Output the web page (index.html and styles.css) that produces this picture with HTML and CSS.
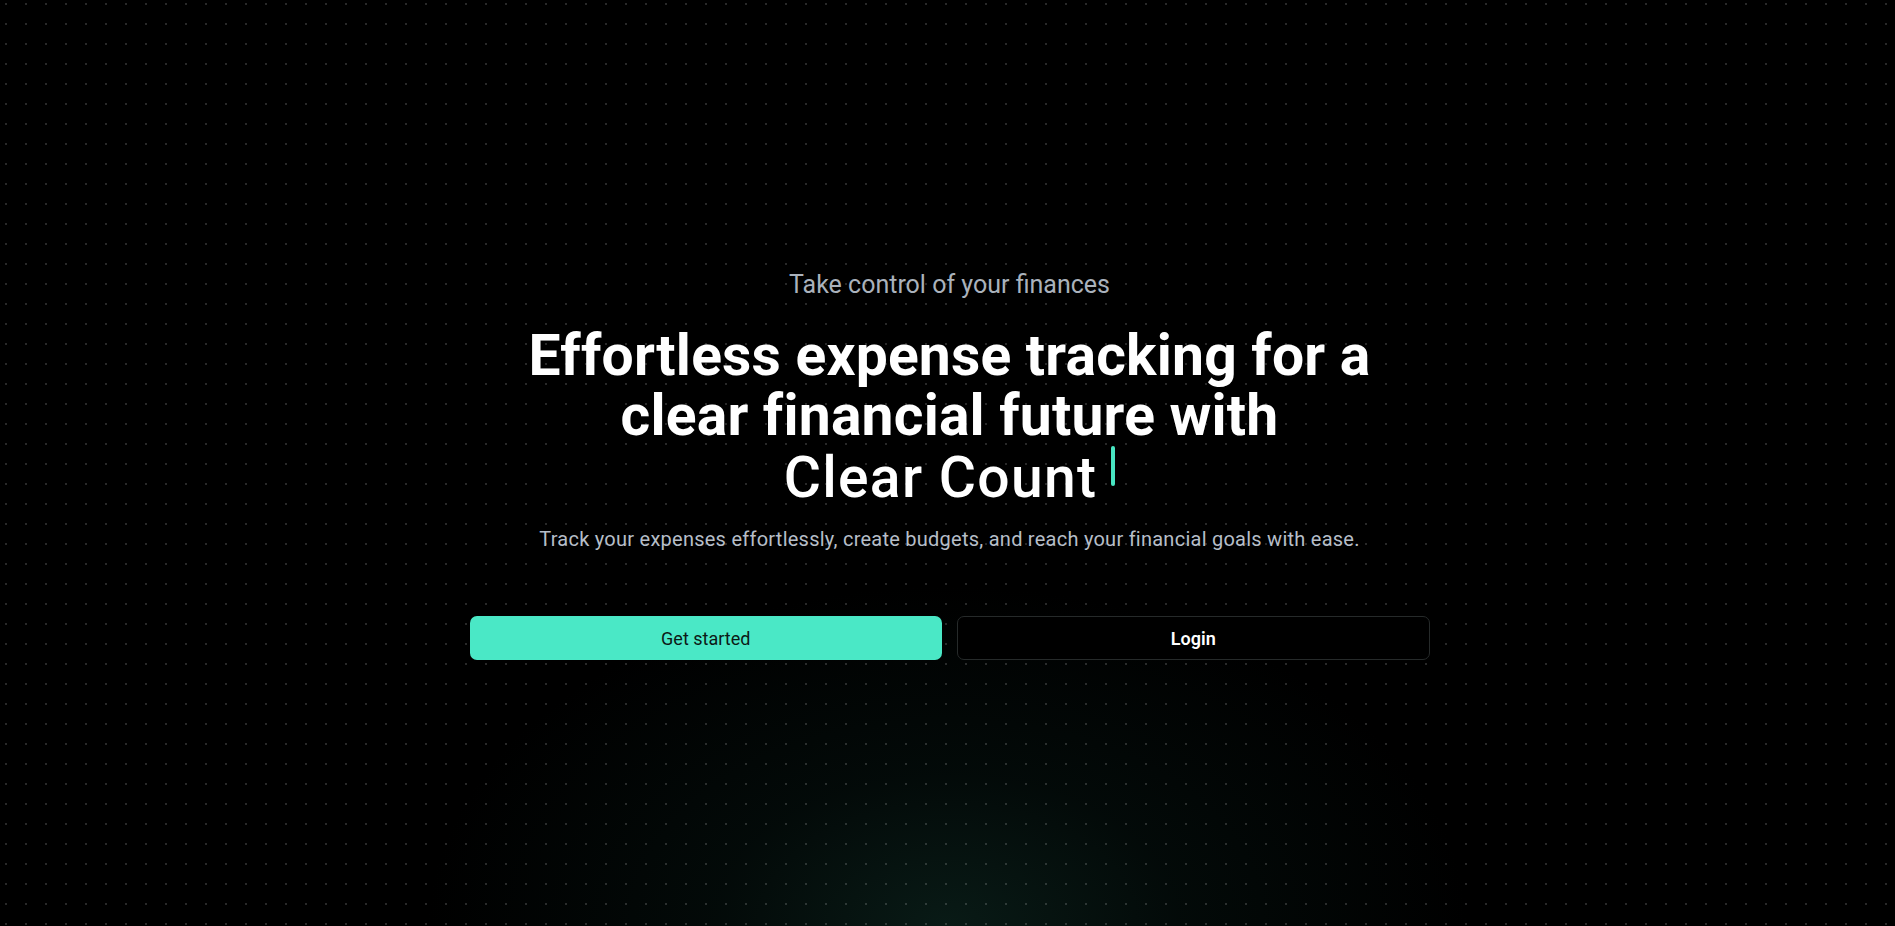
FILE: index.html
```html
<!DOCTYPE html>
<html lang="en">
<head>
<meta charset="utf-8">
<title>Clear Count</title>
<link rel="stylesheet" href="styles.css">
</head>
<body>
<main class="hero">
  <div class="hero-inner">
    <p class="eyebrow">Take control of your finances</p>
    <h1 class="title">
      <span class="title-line">Effortless expense tracking for a</span>
      <span class="title-line">clear financial future with</span>
      <span class="title-line typed">Clear Count<span class="cursor"></span></span>
    </h1>
    <p class="lead">Track your expenses effortlessly, create budgets, and reach your financial goals with ease.</p>
    <div class="actions">
      <a class="btn btn-primary" href="#">Get started</a>
      <a class="btn btn-outline" href="#">Login</a>
    </div>
  </div>
</main>
</body>
</html>
```
FILE: styles.css
```css
* { box-sizing: border-box; }
html, body { margin: 0; padding: 0; }
body {
  background: #000;
  color: #fff;
  font-family: Roboto, "Noto Sans", sans-serif;
  overflow: hidden;
}
.hero {
  min-height: 926px;
  display: flex;
  align-items: center;
  justify-content: center;
  padding-left: 4px;
  padding-top: 3px;
  background-color: #000;
  background-image:
    radial-gradient(circle, rgba(255,255,255,0.16) 0.8px, transparent 1.2px),
    radial-gradient(ellipse 520px 340px at 50% 100%, rgba(16,48,40,0.55) 0%, rgba(8,28,24,0.35) 45%, rgba(0,0,0,0) 100%);
  background-size: 20px 20px, 100% 100%;
  background-position: -4px -6px, 0 0;
}
.hero-inner {
  width: 960px;
  display: flex;
  flex-direction: column;
  align-items: center;
  text-align: center;
}
.eyebrow {
  margin: 0;
  font-size: 25px;
  line-height: 32px;
  font-weight: 400;
  color: #aab2bc;
}
.title {
  margin: 25px 0 0;
  font-size: 57px;
  line-height: 60px;
  font-weight: 700;
  letter-spacing: 0.2px;
  color: #fff;
  display: flex;
  flex-direction: column;
  align-items: center;
}
.title-line { display: block; white-space: nowrap; }
.typed { font-weight: 500; letter-spacing: 1.3px; }
.cursor {
  display: inline-block;
  width: 4px;
  height: 40px;
  margin-left: 14px;
  border-radius: 2px;
  background: #48e5c2;
  vertical-align: 11px;
}
.lead {
  margin: 17px 0 0;
  font-size: 20px;
  line-height: 28px;
  letter-spacing: 0.25px;
  color: #b6bec8;
}
.actions {
  margin-top: 63px;
  width: 960px;
  display: grid;
  grid-template-columns: 1fr 1fr;
  gap: 15px;
}
.btn {
  height: 44px;
  display: flex;
  align-items: center;
  justify-content: center;
  border-radius: 7px;
  font-size: 18px;
  text-decoration: none;
}
.btn-primary {
  background: #4ae8c6;
  color: #0c1a16;
  font-weight: 400;
}
.btn-outline {
  background: #000;
  border: 1px solid #262a2a;
  color: #fff;
  font-weight: 600;
}
```
